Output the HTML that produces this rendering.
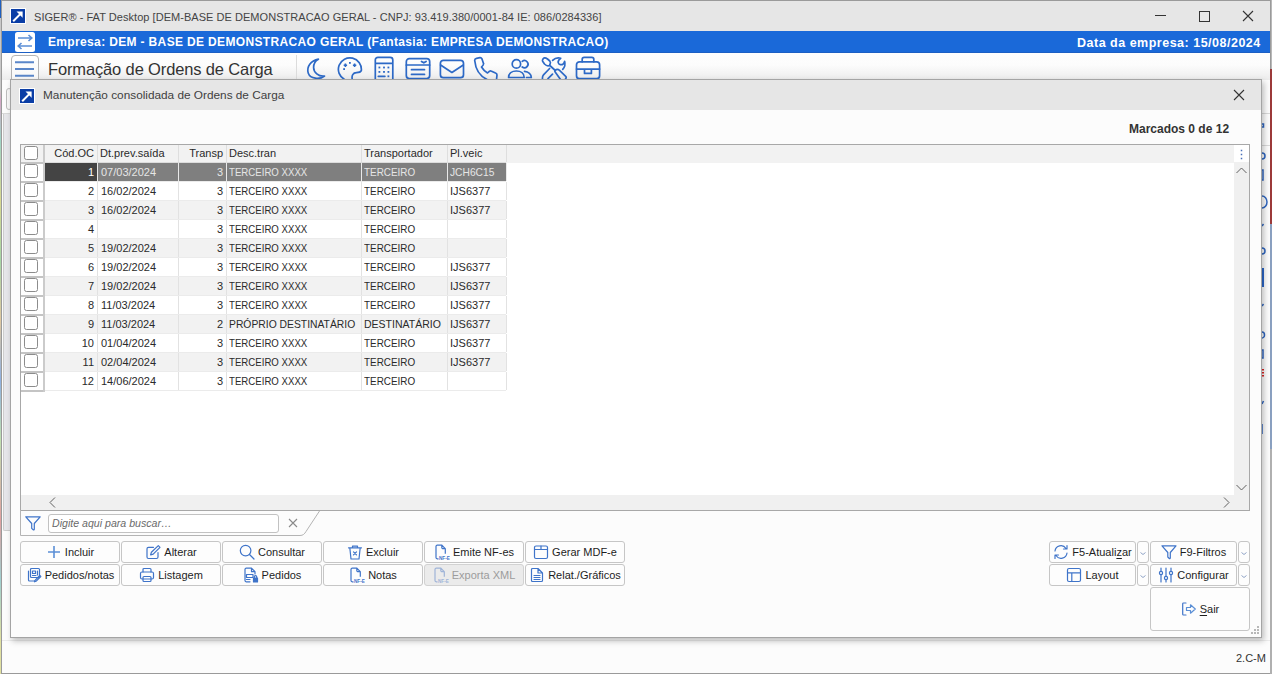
<!DOCTYPE html>
<html><head><meta charset="utf-8">
<style>
*{box-sizing:border-box;margin:0;padding:0}
html,body{width:1272px;height:674px;overflow:hidden;background:#b8b8b8;font-family:"Liberation Sans",sans-serif}
.a{position:absolute}
.t{position:absolute;white-space:nowrap;line-height:1}
#outer{left:1px;top:0;width:1270px;height:674px;border:1px solid #9a9a9a;background:#fcfcfc}
#titlebar{left:2px;top:1px;width:1268px;height:30px;background:#e6e6e6}
#bluebar{left:2px;top:31px;width:1268px;height:22px;background:linear-gradient(#1a69d9 0,#1a69d9 21px,#1c5fc4 21px)}
#toolbar{left:2px;top:53px;width:1268px;height:27px;background:linear-gradient(#fefefe,#fcfcfc 45%,#ececec)}
#dlg{left:10px;top:79px;width:1252px;height:559px;border:1px solid #a4a4a4;background:#fcfcfc;box-shadow:2px 3px 6px rgba(0,0,0,.25)}
#dlgtitle{left:0;top:0;width:1250px;height:30px;background:#e6e6e6}
#grid{left:9px;top:64px;width:1230px;height:367px;border:1px solid #a9a9a9;background:#fff}
</style></head><body>
<div id="outer" class="a"></div>
<div id="titlebar" class="a"></div>
<div id="bluebar" class="a"></div>
<div id="toolbar" class="a"></div>

<!-- title bar -->
<div class="a" style="left:10px;top:8px;width:16px;height:16px;background:#fff"></div>
<svg class="a" style="left:11px;top:9px" width="14" height="14" viewBox="0 0 14 14"><rect width="14" height="14" fill="#0b3ea6"/><path d="M2.2 12.2 L10.5 3.9" stroke="#fff" stroke-width="2"/><path d="M5.5 2.6 L11.6 2.6 L11.6 8.7 Z" fill="#fff"/></svg>
<div class="t" style="left:34px;top:12px;font-size:11px;color:#444;letter-spacing:0.04px">SIGER® - FAT Desktop [DEM-BASE DE DEMONSTRACAO GERAL - CNPJ: 93.419.380/0001-84 IE: 086/0284336]</div>
<svg class="a" style="left:1155px;top:15px" width="11" height="1"><rect width="11" height="1" fill="#333"/></svg>
<svg class="a" style="left:1199px;top:11px" width="11" height="11"><rect x=".5" y=".5" width="10" height="10" fill="none" stroke="#333"/></svg>
<svg class="a" style="left:1242px;top:10px" width="12" height="12"><path d="M1 1 L11 11 M11 1 L1 11" stroke="#333" stroke-width="1.1"/></svg>
<!-- blue bar -->
<svg class="a" style="left:15px;top:32px" width="20" height="20" viewBox="0 0 20 20"><rect width="20" height="20" rx="2.5" fill="#fff"/><path d="M3 6 H16.5 M13.5 3 L16.8 6 L13.5 9 M17 14 H3.5 M6.5 11 L3.2 14 L6.5 17" stroke="#5b8ed6" stroke-width="1.6" fill="none"/></svg>
<div class="t" style="left:48px;top:36px;font-size:12px;font-weight:bold;color:#fff;letter-spacing:0.35px">Empresa: DEM - BASE DE DEMONSTRACAO GERAL (Fantasia: EMPRESA DEMONSTRACAO)</div>
<div class="t" style="left:1077px;top:37px;font-size:12.5px;font-weight:bold;color:#fff;letter-spacing:0.5px">Data da empresa: 15/08/2024</div>

<!-- toolbar -->
<div class="a" style="left:11px;top:55px;width:28px;height:30px;border:1px solid #b4b4b4;border-radius:4px;background:linear-gradient(#fff,#f6f6f6)"></div>
<svg class="a" style="left:15px;top:61px" width="19" height="16"><path d="M0 1.2 H19 M0 8 H19 M0 14.8 H19" stroke="#5a86c9" stroke-width="2"/></svg>
<div class="t" style="left:48px;top:61px;font-size:16.5px;color:#333;letter-spacing:-0.14px">Formação de Ordens de Carga</div>
<div class="a" style="left:296px;top:55px;width:1px;height:25px;background:#dcdcdc"></div>

<svg class="a" style="left:300px;top:54px" width="310" height="26" viewBox="0 0 310 26">
<g fill="none" stroke="#2d69c6" stroke-width="1.7" stroke-linejoin="round" stroke-linecap="round">
<!-- moon -->
<path d="M18.4 5.2 C11 6.5 6.2 13 8.3 19.2 C10.3 24.8 19.5 26 24.5 22 C18.5 22.8 13.6 18.2 13.6 13.4 C13.6 9.6 15.4 6.8 18.4 5.2 Z"/>
<!-- palette -->
<path d="M44.5 25.5 A11.5 11.5 0 1 1 61.3 16.6 C60.6 18.2 59 18.6 56.5 18.6 C53 18.6 51.4 21.6 52.3 25.5"/>
<!-- calculator -->
<path d="M5.3 25.5 V6 A2.6 2.6 0 0 1 7.9 3.4 H20.2 A2.6 2.6 0 0 1 22.8 6 V25.5 M5.3 9.4 H22.8" transform="translate(70 0)"/>
<path d="M78.3 22.3 H84.9" />
<!-- window -->
<rect x="106.3" y="4.7" width="23.4" height="19.8" rx="3"/>
<path d="M106.3 11 H129.7 M111.5 15.7 H124.5 M111.5 20.4 H124.5 M121.5 7.4 L123.8 8.8 L126.1 7.4"/>
<!-- mail -->
<rect x="140.4" y="6.3" width="23.1" height="17.4" rx="3"/>
<path d="M140.6 11 L151.9 18.5 L163.3 11"/>
<!-- phone -->
<path d="M196.5 25.5 L197 21 C197 20 196.5 19.3 195.5 19 L191 17 C190 16.5 189 17.5 187.5 19 C185 17.5 183 15.5 181.5 13 C183 11.5 184 10.5 183.5 9.5 L182 5 C181.5 4 181 3.6 180 3.7 L176.5 4.3 C175 4.6 174.5 5.5 174.8 7 C175.5 15 180 22 187 25.5"/>
<!-- users -->
<circle cx="216.4" cy="9.9" r="4.2"/>
<path d="M222.2 7.3 A3.6 3.6 0 1 1 222.2 13"/>
<path d="M208.6 23.5 C208.6 19.5 212 17 216.4 17 C220.8 17 224.2 19.5 224.2 23.5 Z"/>
<path d="M224.5 17.3 C228.5 17.8 231.3 20.5 231.3 23.5 H226.5"/>
<!-- tools -->
<path d="M242.6 7.2 C242 6 243.2 4.2 244.6 3.9 C245.5 3.7 246.5 4.3 247.5 5 L249.8 7 C250.5 7.8 250.6 9.2 250 10.5 L249.5 11.5 L248 11.8 C246.8 11.8 245.5 11 244.5 10 Z M249.8 11.5 L255.3 16.5"/>
<path d="M255 17.8 C254.5 16.5 255.7 15.3 257.5 15.3 C258.3 15.3 258.8 15.7 259.3 16.2 L265.7 22.3 C266.4 23 266 24.5 265 25.5 M255 17.8 L260.5 25.5"/>
<path d="M252.6 6.4 C254.5 4.5 258 3.5 260.7 4.2 C259 5.5 257.8 7 258.2 8.6 C258.8 10.8 261.5 11.2 263.2 10 C264 9 264.5 8 264.6 7.3 C265.5 10.5 264.5 13.5 262.7 15.4"/>
<path d="M249.6 14.5 L243.5 20.8 C242.5 21.8 242.3 23.5 242.5 25.5 M252.5 20.2 L248 24.7"/>
<!-- briefcase -->
<rect x="276.5" y="7.8" width="23.1" height="16.9" rx="3"/>
<path d="M282.2 7.8 V5.3 A2 2 0 0 1 284.2 3.3 H291.8 A2 2 0 0 1 293.8 5.3 V7.8 M276.5 15.1 H299.6 M284.5 15.1 V19.4 H291.4 V15.1"/>
</g>
<g fill="#2d69c6">
<rect x="49" y="8" width="1.8" height="1.8"/><rect x="43.2" y="14.2" width="1.8" height="1.8"/>
<path d="M44.6 9.6 h1.6 v0.9 h0.9 v1.6 h-0.9 v0.9 h-1.6 v-0.9 h-0.9 v-1.6 h0.9z M53.8 9.6 h1.6 v0.9 h0.9 v1.6 h-0.9 v0.9 h-1.6 v-0.9 h-0.9 v-1.6 h0.9z"/>
<rect x="78.5" y="12.6" width="1.8" height="1.8"/><rect x="83.1" y="12.6" width="1.8" height="1.8"/><rect x="87.5" y="12.6" width="1.8" height="1.8"/>
<rect x="78.5" y="17" width="1.8" height="1.8"/><rect x="83.1" y="17" width="1.8" height="1.8"/><rect x="87.5" y="17" width="1.8" height="1.8"/>
<rect x="87.5" y="21.4" width="1.8" height="1.8"/>
</g>
</svg>

<!-- status + side strips -->
<div class="t" style="left:1236px;top:653px;font-size:11px;color:#333">2.C-M</div>
<div class="a" style="left:2px;top:640px;width:1268px;height:1px;background:#ececec"></div>
<div class="a" style="left:0;top:0;width:1px;height:674px;background:linear-gradient(#1f5fbf 0,#1f5fbf 18px,#c8c8c8 18px,#c8c8c8 90px,#d6a6c6 100px,#9fd4c6 140px,#d8d890 200px,#a6d6a6 260px,#e0c8a0 320px,#8fb0e0 380px,#c0e0b0 440px,#e0a0a0 520px,#a0d0d0 580px,#e0e0a0 640px)"></div>
<div class="a" style="left:1270px;top:69px;width:2px;height:605px;background:linear-gradient(#9c3a3a 0,#9c3a3a 155px,#8aa0c0 155px,#8aa0c0 380px,#b0b0b0 380px)"></div>
<div class="a" style="left:1262px;top:113px;width:8px;height:1px;background:#d8d8d8"></div>
<div class="a" style="left:1262px;top:145px;width:8px;height:1px;background:#d8d8d8"></div>
<div class="a" style="left:1262px;top:268px;width:2px;height:19px;background:#2a66c8"></div>
<div class="a" style="left:6px;top:88px;width:6px;height:22px;border:1px solid #bdbdbd;border-radius:3px;background:#f8f8f8"></div>
<div class="a" style="left:2px;top:113px;width:8px;height:1px;background:#d8d8d8"></div>
<div class="a" style="left:3px;top:114px;width:7px;height:417px;border-left:1px solid #cdcdcd;border-bottom:1px solid #cdcdcd;border-bottom-left-radius:2px;background:#e6e6ea"></div>

<svg class="a" style="left:1262px;top:114px" width="8" height="340"><g fill="none" stroke="#2f66c0" stroke-width="1.5">
<path d="M0 10 h1.5 v3 h-1.5"/><path d="M0 39 a3 3 0 0 1 0 6"/><path d="M0 56 h1 v10 h-1"/><path d="M0 82 a5 6 0 0 1 0 12"/><path d="M0 112 l1.5 -2"/><path d="M0 134 a3 3 0 0 1 0 6"/>
<path d="M0 192 l1.5 -2"/><path d="M0 218 a2.5 3 0 0 1 0 6"/><path d="M0 236 h1 v8 h-1"/><path d="M0 290 l1.5 -3"/><path d="M0 310 v10"/>
</g><g fill="#d22" ><rect x="0" y="255" width="2" height="1.5"/><rect x="0" y="258" width="2" height="1.5"/><rect x="0" y="261" width="2" height="1.5"/></g></svg>
<div id="dlg" class="a">
  <div id="dlgtitle" class="a"></div>
  <div class="a" style="left:8px;top:8px;width:16px;height:16px;background:#fff"></div>
  <svg class="a" style="left:9px;top:9px" width="14" height="14" viewBox="0 0 14 14"><rect width="14" height="14" fill="#0b3ea6"/><path d="M2.2 12.2 L10.5 3.9" stroke="#fff" stroke-width="2"/><path d="M5.5 2.6 L11.6 2.6 L11.6 8.7 Z" fill="#fff"/></svg>
  <div class="t" style="left:32px;top:10px;font-size:11.8px;color:#404040">Manutenção consolidada de Ordens de Carga</div>
  <svg class="a" style="left:1222px;top:9px" width="12" height="12"><path d="M1 1 L11 11 M11 1 L1 11" stroke="#333" stroke-width="1.1"/></svg>
  <div class="t" style="left:1118px;top:43px;font-size:12px;font-weight:bold;color:#333">Marcados 0 de 12</div>

  
</div>
<!--GRID--><div class="a" style="left:20px;top:144px;width:1230px;height:367px;border:1px solid #a8a8a8;background:#fff"></div>
<div class="a" style="left:21px;top:145px;width:1213px;height:18px;background:#f2f2f2"></div>
<div class="a" style="left:1234px;top:145px;width:15px;height:17px;background:#fff"></div>
<div class="a" style="left:44px;top:145px;width:1px;height:17px;background:#d6d6d6"></div>
<div class="a" style="left:97px;top:145px;width:1px;height:17px;background:#dedede"></div>
<div class="a" style="left:178px;top:145px;width:1px;height:17px;background:#dedede"></div>
<div class="a" style="left:226px;top:145px;width:1px;height:17px;background:#dedede"></div>
<div class="a" style="left:361px;top:145px;width:1px;height:17px;background:#dedede"></div>
<div class="a" style="left:447px;top:145px;width:1px;height:17px;background:#dedede"></div>
<div class="a" style="left:506px;top:145px;width:1px;height:17px;background:#dedede"></div>
<div class="t" style="left:45px;width:49px;top:148px;text-align:right;font-size:11px;color:#2a2a2a;">Cód.OC</div>
<div class="t" style="left:100px;top:148px;font-size:11px;color:#2a2a2a;">Dt.prev.saída</div>
<div class="t" style="left:179px;width:44px;top:148px;text-align:right;font-size:11px;color:#2a2a2a;">Transp</div>
<div class="t" style="left:229px;top:148px;font-size:11px;color:#2a2a2a;">Desc.tran</div>
<div class="t" style="left:364px;top:148px;font-size:11px;color:#2a2a2a;">Transportador</div>
<div class="t" style="left:450px;top:148px;font-size:11px;color:#2a2a2a;">Pl.veic</div>
<div class="a" style="left:24px;top:146px;width:14px;height:14px;border:1px solid #8c8c8c;border-radius:2.5px;background:#fff"></div>
<div class="a" style="left:21px;top:162px;width:23px;height:1.5px;background:#c4c4c4"></div>
<div class="a" style="left:24px;top:164px;width:14px;height:14px;border:1px solid #8c8c8c;border-radius:2.5px;background:#fff"></div>
<div class="a" style="left:45px;top:162px;width:461px;height:1px;background:#dcdcdc"></div>
<div class="a" style="left:45px;top:163px;width:52px;height:18px;background:#444444"></div>
<div class="a" style="left:97px;top:163px;width:1px;height:18px;background:#e9e9e9"></div>
<div class="a" style="left:98px;top:163px;width:80px;height:18px;background:#7f7f7f"></div>
<div class="a" style="left:178px;top:163px;width:1px;height:18px;background:#e9e9e9"></div>
<div class="a" style="left:179px;top:163px;width:47px;height:18px;background:#7f7f7f"></div>
<div class="a" style="left:226px;top:163px;width:1px;height:18px;background:#e9e9e9"></div>
<div class="a" style="left:227px;top:163px;width:134px;height:18px;background:#7f7f7f"></div>
<div class="a" style="left:361px;top:163px;width:1px;height:18px;background:#e9e9e9"></div>
<div class="a" style="left:362px;top:163px;width:85px;height:18px;background:#7f7f7f"></div>
<div class="a" style="left:447px;top:163px;width:1px;height:18px;background:#e9e9e9"></div>
<div class="a" style="left:448px;top:163px;width:58px;height:18px;background:#7f7f7f"></div>
<div class="a" style="left:506px;top:163px;width:1px;height:18px;background:#e9e9e9"></div>
<div class="t" style="left:45px;width:49px;top:167px;text-align:right;font-size:11px;color:#ffffff;">1</div>
<div class="t" style="left:101px;top:167px;font-size:11px;color:#e6e6e6;">07/03/2024</div>
<div class="t" style="left:179px;width:44px;top:167px;text-align:right;font-size:11px;color:#e6e6e6;">3</div>
<div class="t" style="left:229px;top:167px;font-size:11px;color:#e6e6e6;transform:scaleX(0.877);transform-origin:0 0;">TERCEIRO XXXX</div>
<div class="t" style="left:364px;top:167px;font-size:11px;color:#e6e6e6;transform:scaleX(0.9);transform-origin:0 0;">TERCEIRO</div>
<div class="t" style="left:450px;top:167px;font-size:11px;color:#e6e6e6;transform:scaleX(0.93);transform-origin:0 0;">JCH6C15</div>
<div class="a" style="left:21px;top:181px;width:23px;height:1.5px;background:#c4c4c4"></div>
<div class="a" style="left:24px;top:183px;width:14px;height:14px;border:1px solid #8c8c8c;border-radius:2.5px;background:#fff"></div>
<div class="a" style="left:45px;top:181px;width:461px;height:1px;background:#ebebeb"></div>
<div class="a" style="left:45px;top:182px;width:52px;height:18px;background:#ffffff"></div>
<div class="a" style="left:97px;top:182px;width:1px;height:18px;background:#e2e2e2"></div>
<div class="a" style="left:98px;top:182px;width:80px;height:18px;background:#ffffff"></div>
<div class="a" style="left:178px;top:182px;width:1px;height:18px;background:#e2e2e2"></div>
<div class="a" style="left:179px;top:182px;width:47px;height:18px;background:#ffffff"></div>
<div class="a" style="left:226px;top:182px;width:1px;height:18px;background:#e2e2e2"></div>
<div class="a" style="left:227px;top:182px;width:134px;height:18px;background:#ffffff"></div>
<div class="a" style="left:361px;top:182px;width:1px;height:18px;background:#e2e2e2"></div>
<div class="a" style="left:362px;top:182px;width:85px;height:18px;background:#ffffff"></div>
<div class="a" style="left:447px;top:182px;width:1px;height:18px;background:#e2e2e2"></div>
<div class="a" style="left:448px;top:182px;width:58px;height:18px;background:#ffffff"></div>
<div class="a" style="left:506px;top:182px;width:1px;height:18px;background:#e2e2e2"></div>
<div class="t" style="left:45px;width:49px;top:186px;text-align:right;font-size:11px;color:#2a2a2a;">2</div>
<div class="t" style="left:101px;top:186px;font-size:11px;color:#2a2a2a;">16/02/2024</div>
<div class="t" style="left:179px;width:44px;top:186px;text-align:right;font-size:11px;color:#2a2a2a;">3</div>
<div class="t" style="left:229px;top:186px;font-size:11px;color:#2a2a2a;transform:scaleX(0.877);transform-origin:0 0;">TERCEIRO XXXX</div>
<div class="t" style="left:364px;top:186px;font-size:11px;color:#2a2a2a;transform:scaleX(0.9);transform-origin:0 0;">TERCEIRO</div>
<div class="t" style="left:450px;top:186px;font-size:11px;color:#2a2a2a;">IJS6377</div>
<div class="a" style="left:21px;top:200px;width:23px;height:1.5px;background:#c4c4c4"></div>
<div class="a" style="left:24px;top:202px;width:14px;height:14px;border:1px solid #8c8c8c;border-radius:2.5px;background:#fff"></div>
<div class="a" style="left:45px;top:200px;width:461px;height:1px;background:#ebebeb"></div>
<div class="a" style="left:45px;top:201px;width:52px;height:18px;background:#f2f2f2"></div>
<div class="a" style="left:97px;top:201px;width:1px;height:18px;background:#e2e2e2"></div>
<div class="a" style="left:98px;top:201px;width:80px;height:18px;background:#f2f2f2"></div>
<div class="a" style="left:178px;top:201px;width:1px;height:18px;background:#e2e2e2"></div>
<div class="a" style="left:179px;top:201px;width:47px;height:18px;background:#f2f2f2"></div>
<div class="a" style="left:226px;top:201px;width:1px;height:18px;background:#e2e2e2"></div>
<div class="a" style="left:227px;top:201px;width:134px;height:18px;background:#f2f2f2"></div>
<div class="a" style="left:361px;top:201px;width:1px;height:18px;background:#e2e2e2"></div>
<div class="a" style="left:362px;top:201px;width:85px;height:18px;background:#f2f2f2"></div>
<div class="a" style="left:447px;top:201px;width:1px;height:18px;background:#e2e2e2"></div>
<div class="a" style="left:448px;top:201px;width:58px;height:18px;background:#f2f2f2"></div>
<div class="a" style="left:506px;top:201px;width:1px;height:18px;background:#e2e2e2"></div>
<div class="t" style="left:45px;width:49px;top:205px;text-align:right;font-size:11px;color:#2a2a2a;">3</div>
<div class="t" style="left:101px;top:205px;font-size:11px;color:#2a2a2a;">16/02/2024</div>
<div class="t" style="left:179px;width:44px;top:205px;text-align:right;font-size:11px;color:#2a2a2a;">3</div>
<div class="t" style="left:229px;top:205px;font-size:11px;color:#2a2a2a;transform:scaleX(0.877);transform-origin:0 0;">TERCEIRO XXXX</div>
<div class="t" style="left:364px;top:205px;font-size:11px;color:#2a2a2a;transform:scaleX(0.9);transform-origin:0 0;">TERCEIRO</div>
<div class="t" style="left:450px;top:205px;font-size:11px;color:#2a2a2a;">IJS6377</div>
<div class="a" style="left:21px;top:219px;width:23px;height:1.5px;background:#c4c4c4"></div>
<div class="a" style="left:24px;top:221px;width:14px;height:14px;border:1px solid #8c8c8c;border-radius:2.5px;background:#fff"></div>
<div class="a" style="left:45px;top:219px;width:461px;height:1px;background:#ebebeb"></div>
<div class="a" style="left:45px;top:220px;width:52px;height:18px;background:#ffffff"></div>
<div class="a" style="left:97px;top:220px;width:1px;height:18px;background:#e2e2e2"></div>
<div class="a" style="left:98px;top:220px;width:80px;height:18px;background:#ffffff"></div>
<div class="a" style="left:178px;top:220px;width:1px;height:18px;background:#e2e2e2"></div>
<div class="a" style="left:179px;top:220px;width:47px;height:18px;background:#ffffff"></div>
<div class="a" style="left:226px;top:220px;width:1px;height:18px;background:#e2e2e2"></div>
<div class="a" style="left:227px;top:220px;width:134px;height:18px;background:#ffffff"></div>
<div class="a" style="left:361px;top:220px;width:1px;height:18px;background:#e2e2e2"></div>
<div class="a" style="left:362px;top:220px;width:85px;height:18px;background:#ffffff"></div>
<div class="a" style="left:447px;top:220px;width:1px;height:18px;background:#e2e2e2"></div>
<div class="a" style="left:448px;top:220px;width:58px;height:18px;background:#ffffff"></div>
<div class="a" style="left:506px;top:220px;width:1px;height:18px;background:#e2e2e2"></div>
<div class="t" style="left:45px;width:49px;top:224px;text-align:right;font-size:11px;color:#2a2a2a;">4</div>
<div class="t" style="left:179px;width:44px;top:224px;text-align:right;font-size:11px;color:#2a2a2a;">3</div>
<div class="t" style="left:229px;top:224px;font-size:11px;color:#2a2a2a;transform:scaleX(0.877);transform-origin:0 0;">TERCEIRO XXXX</div>
<div class="t" style="left:364px;top:224px;font-size:11px;color:#2a2a2a;transform:scaleX(0.9);transform-origin:0 0;">TERCEIRO</div>
<div class="a" style="left:21px;top:238px;width:23px;height:1.5px;background:#c4c4c4"></div>
<div class="a" style="left:24px;top:240px;width:14px;height:14px;border:1px solid #8c8c8c;border-radius:2.5px;background:#fff"></div>
<div class="a" style="left:45px;top:238px;width:461px;height:1px;background:#ebebeb"></div>
<div class="a" style="left:45px;top:239px;width:52px;height:18px;background:#f2f2f2"></div>
<div class="a" style="left:97px;top:239px;width:1px;height:18px;background:#e2e2e2"></div>
<div class="a" style="left:98px;top:239px;width:80px;height:18px;background:#f2f2f2"></div>
<div class="a" style="left:178px;top:239px;width:1px;height:18px;background:#e2e2e2"></div>
<div class="a" style="left:179px;top:239px;width:47px;height:18px;background:#f2f2f2"></div>
<div class="a" style="left:226px;top:239px;width:1px;height:18px;background:#e2e2e2"></div>
<div class="a" style="left:227px;top:239px;width:134px;height:18px;background:#f2f2f2"></div>
<div class="a" style="left:361px;top:239px;width:1px;height:18px;background:#e2e2e2"></div>
<div class="a" style="left:362px;top:239px;width:85px;height:18px;background:#f2f2f2"></div>
<div class="a" style="left:447px;top:239px;width:1px;height:18px;background:#e2e2e2"></div>
<div class="a" style="left:448px;top:239px;width:58px;height:18px;background:#f2f2f2"></div>
<div class="a" style="left:506px;top:239px;width:1px;height:18px;background:#e2e2e2"></div>
<div class="t" style="left:45px;width:49px;top:243px;text-align:right;font-size:11px;color:#2a2a2a;">5</div>
<div class="t" style="left:101px;top:243px;font-size:11px;color:#2a2a2a;">19/02/2024</div>
<div class="t" style="left:179px;width:44px;top:243px;text-align:right;font-size:11px;color:#2a2a2a;">3</div>
<div class="t" style="left:229px;top:243px;font-size:11px;color:#2a2a2a;transform:scaleX(0.877);transform-origin:0 0;">TERCEIRO XXXX</div>
<div class="t" style="left:364px;top:243px;font-size:11px;color:#2a2a2a;transform:scaleX(0.9);transform-origin:0 0;">TERCEIRO</div>
<div class="a" style="left:21px;top:257px;width:23px;height:1.5px;background:#c4c4c4"></div>
<div class="a" style="left:24px;top:259px;width:14px;height:14px;border:1px solid #8c8c8c;border-radius:2.5px;background:#fff"></div>
<div class="a" style="left:45px;top:257px;width:461px;height:1px;background:#ebebeb"></div>
<div class="a" style="left:45px;top:258px;width:52px;height:18px;background:#ffffff"></div>
<div class="a" style="left:97px;top:258px;width:1px;height:18px;background:#e2e2e2"></div>
<div class="a" style="left:98px;top:258px;width:80px;height:18px;background:#ffffff"></div>
<div class="a" style="left:178px;top:258px;width:1px;height:18px;background:#e2e2e2"></div>
<div class="a" style="left:179px;top:258px;width:47px;height:18px;background:#ffffff"></div>
<div class="a" style="left:226px;top:258px;width:1px;height:18px;background:#e2e2e2"></div>
<div class="a" style="left:227px;top:258px;width:134px;height:18px;background:#ffffff"></div>
<div class="a" style="left:361px;top:258px;width:1px;height:18px;background:#e2e2e2"></div>
<div class="a" style="left:362px;top:258px;width:85px;height:18px;background:#ffffff"></div>
<div class="a" style="left:447px;top:258px;width:1px;height:18px;background:#e2e2e2"></div>
<div class="a" style="left:448px;top:258px;width:58px;height:18px;background:#ffffff"></div>
<div class="a" style="left:506px;top:258px;width:1px;height:18px;background:#e2e2e2"></div>
<div class="t" style="left:45px;width:49px;top:262px;text-align:right;font-size:11px;color:#2a2a2a;">6</div>
<div class="t" style="left:101px;top:262px;font-size:11px;color:#2a2a2a;">19/02/2024</div>
<div class="t" style="left:179px;width:44px;top:262px;text-align:right;font-size:11px;color:#2a2a2a;">3</div>
<div class="t" style="left:229px;top:262px;font-size:11px;color:#2a2a2a;transform:scaleX(0.877);transform-origin:0 0;">TERCEIRO XXXX</div>
<div class="t" style="left:364px;top:262px;font-size:11px;color:#2a2a2a;transform:scaleX(0.9);transform-origin:0 0;">TERCEIRO</div>
<div class="t" style="left:450px;top:262px;font-size:11px;color:#2a2a2a;">IJS6377</div>
<div class="a" style="left:21px;top:276px;width:23px;height:1.5px;background:#c4c4c4"></div>
<div class="a" style="left:24px;top:278px;width:14px;height:14px;border:1px solid #8c8c8c;border-radius:2.5px;background:#fff"></div>
<div class="a" style="left:45px;top:276px;width:461px;height:1px;background:#ebebeb"></div>
<div class="a" style="left:45px;top:277px;width:52px;height:18px;background:#f2f2f2"></div>
<div class="a" style="left:97px;top:277px;width:1px;height:18px;background:#e2e2e2"></div>
<div class="a" style="left:98px;top:277px;width:80px;height:18px;background:#f2f2f2"></div>
<div class="a" style="left:178px;top:277px;width:1px;height:18px;background:#e2e2e2"></div>
<div class="a" style="left:179px;top:277px;width:47px;height:18px;background:#f2f2f2"></div>
<div class="a" style="left:226px;top:277px;width:1px;height:18px;background:#e2e2e2"></div>
<div class="a" style="left:227px;top:277px;width:134px;height:18px;background:#f2f2f2"></div>
<div class="a" style="left:361px;top:277px;width:1px;height:18px;background:#e2e2e2"></div>
<div class="a" style="left:362px;top:277px;width:85px;height:18px;background:#f2f2f2"></div>
<div class="a" style="left:447px;top:277px;width:1px;height:18px;background:#e2e2e2"></div>
<div class="a" style="left:448px;top:277px;width:58px;height:18px;background:#f2f2f2"></div>
<div class="a" style="left:506px;top:277px;width:1px;height:18px;background:#e2e2e2"></div>
<div class="t" style="left:45px;width:49px;top:281px;text-align:right;font-size:11px;color:#2a2a2a;">7</div>
<div class="t" style="left:101px;top:281px;font-size:11px;color:#2a2a2a;">19/02/2024</div>
<div class="t" style="left:179px;width:44px;top:281px;text-align:right;font-size:11px;color:#2a2a2a;">3</div>
<div class="t" style="left:229px;top:281px;font-size:11px;color:#2a2a2a;transform:scaleX(0.877);transform-origin:0 0;">TERCEIRO XXXX</div>
<div class="t" style="left:364px;top:281px;font-size:11px;color:#2a2a2a;transform:scaleX(0.9);transform-origin:0 0;">TERCEIRO</div>
<div class="t" style="left:450px;top:281px;font-size:11px;color:#2a2a2a;">IJS6377</div>
<div class="a" style="left:21px;top:295px;width:23px;height:1.5px;background:#c4c4c4"></div>
<div class="a" style="left:24px;top:297px;width:14px;height:14px;border:1px solid #8c8c8c;border-radius:2.5px;background:#fff"></div>
<div class="a" style="left:45px;top:295px;width:461px;height:1px;background:#ebebeb"></div>
<div class="a" style="left:45px;top:296px;width:52px;height:18px;background:#ffffff"></div>
<div class="a" style="left:97px;top:296px;width:1px;height:18px;background:#e2e2e2"></div>
<div class="a" style="left:98px;top:296px;width:80px;height:18px;background:#ffffff"></div>
<div class="a" style="left:178px;top:296px;width:1px;height:18px;background:#e2e2e2"></div>
<div class="a" style="left:179px;top:296px;width:47px;height:18px;background:#ffffff"></div>
<div class="a" style="left:226px;top:296px;width:1px;height:18px;background:#e2e2e2"></div>
<div class="a" style="left:227px;top:296px;width:134px;height:18px;background:#ffffff"></div>
<div class="a" style="left:361px;top:296px;width:1px;height:18px;background:#e2e2e2"></div>
<div class="a" style="left:362px;top:296px;width:85px;height:18px;background:#ffffff"></div>
<div class="a" style="left:447px;top:296px;width:1px;height:18px;background:#e2e2e2"></div>
<div class="a" style="left:448px;top:296px;width:58px;height:18px;background:#ffffff"></div>
<div class="a" style="left:506px;top:296px;width:1px;height:18px;background:#e2e2e2"></div>
<div class="t" style="left:45px;width:49px;top:300px;text-align:right;font-size:11px;color:#2a2a2a;">8</div>
<div class="t" style="left:101px;top:300px;font-size:11px;color:#2a2a2a;">11/03/2024</div>
<div class="t" style="left:179px;width:44px;top:300px;text-align:right;font-size:11px;color:#2a2a2a;">3</div>
<div class="t" style="left:229px;top:300px;font-size:11px;color:#2a2a2a;transform:scaleX(0.877);transform-origin:0 0;">TERCEIRO XXXX</div>
<div class="t" style="left:364px;top:300px;font-size:11px;color:#2a2a2a;transform:scaleX(0.9);transform-origin:0 0;">TERCEIRO</div>
<div class="t" style="left:450px;top:300px;font-size:11px;color:#2a2a2a;">IJS6377</div>
<div class="a" style="left:21px;top:314px;width:23px;height:1.5px;background:#c4c4c4"></div>
<div class="a" style="left:24px;top:316px;width:14px;height:14px;border:1px solid #8c8c8c;border-radius:2.5px;background:#fff"></div>
<div class="a" style="left:45px;top:314px;width:461px;height:1px;background:#ebebeb"></div>
<div class="a" style="left:45px;top:315px;width:52px;height:18px;background:#f2f2f2"></div>
<div class="a" style="left:97px;top:315px;width:1px;height:18px;background:#e2e2e2"></div>
<div class="a" style="left:98px;top:315px;width:80px;height:18px;background:#f2f2f2"></div>
<div class="a" style="left:178px;top:315px;width:1px;height:18px;background:#e2e2e2"></div>
<div class="a" style="left:179px;top:315px;width:47px;height:18px;background:#f2f2f2"></div>
<div class="a" style="left:226px;top:315px;width:1px;height:18px;background:#e2e2e2"></div>
<div class="a" style="left:227px;top:315px;width:134px;height:18px;background:#f2f2f2"></div>
<div class="a" style="left:361px;top:315px;width:1px;height:18px;background:#e2e2e2"></div>
<div class="a" style="left:362px;top:315px;width:85px;height:18px;background:#f2f2f2"></div>
<div class="a" style="left:447px;top:315px;width:1px;height:18px;background:#e2e2e2"></div>
<div class="a" style="left:448px;top:315px;width:58px;height:18px;background:#f2f2f2"></div>
<div class="a" style="left:506px;top:315px;width:1px;height:18px;background:#e2e2e2"></div>
<div class="t" style="left:45px;width:49px;top:319px;text-align:right;font-size:11px;color:#2a2a2a;">9</div>
<div class="t" style="left:101px;top:319px;font-size:11px;color:#2a2a2a;">11/03/2024</div>
<div class="t" style="left:179px;width:44px;top:319px;text-align:right;font-size:11px;color:#2a2a2a;">2</div>
<div class="t" style="left:229px;top:319px;font-size:11px;color:#2a2a2a;transform:scaleX(0.94);transform-origin:0 0;">PRÓPRIO DESTINATÁRIO</div>
<div class="t" style="left:364px;top:319px;font-size:11px;color:#2a2a2a;transform:scaleX(0.956);transform-origin:0 0;">DESTINATÁRIO</div>
<div class="t" style="left:450px;top:319px;font-size:11px;color:#2a2a2a;">IJS6377</div>
<div class="a" style="left:21px;top:333px;width:23px;height:1.5px;background:#c4c4c4"></div>
<div class="a" style="left:24px;top:335px;width:14px;height:14px;border:1px solid #8c8c8c;border-radius:2.5px;background:#fff"></div>
<div class="a" style="left:45px;top:333px;width:461px;height:1px;background:#ebebeb"></div>
<div class="a" style="left:45px;top:334px;width:52px;height:18px;background:#ffffff"></div>
<div class="a" style="left:97px;top:334px;width:1px;height:18px;background:#e2e2e2"></div>
<div class="a" style="left:98px;top:334px;width:80px;height:18px;background:#ffffff"></div>
<div class="a" style="left:178px;top:334px;width:1px;height:18px;background:#e2e2e2"></div>
<div class="a" style="left:179px;top:334px;width:47px;height:18px;background:#ffffff"></div>
<div class="a" style="left:226px;top:334px;width:1px;height:18px;background:#e2e2e2"></div>
<div class="a" style="left:227px;top:334px;width:134px;height:18px;background:#ffffff"></div>
<div class="a" style="left:361px;top:334px;width:1px;height:18px;background:#e2e2e2"></div>
<div class="a" style="left:362px;top:334px;width:85px;height:18px;background:#ffffff"></div>
<div class="a" style="left:447px;top:334px;width:1px;height:18px;background:#e2e2e2"></div>
<div class="a" style="left:448px;top:334px;width:58px;height:18px;background:#ffffff"></div>
<div class="a" style="left:506px;top:334px;width:1px;height:18px;background:#e2e2e2"></div>
<div class="t" style="left:45px;width:49px;top:338px;text-align:right;font-size:11px;color:#2a2a2a;">10</div>
<div class="t" style="left:101px;top:338px;font-size:11px;color:#2a2a2a;">01/04/2024</div>
<div class="t" style="left:179px;width:44px;top:338px;text-align:right;font-size:11px;color:#2a2a2a;">3</div>
<div class="t" style="left:229px;top:338px;font-size:11px;color:#2a2a2a;transform:scaleX(0.877);transform-origin:0 0;">TERCEIRO XXXX</div>
<div class="t" style="left:364px;top:338px;font-size:11px;color:#2a2a2a;transform:scaleX(0.9);transform-origin:0 0;">TERCEIRO</div>
<div class="t" style="left:450px;top:338px;font-size:11px;color:#2a2a2a;">IJS6377</div>
<div class="a" style="left:21px;top:352px;width:23px;height:1.5px;background:#c4c4c4"></div>
<div class="a" style="left:24px;top:354px;width:14px;height:14px;border:1px solid #8c8c8c;border-radius:2.5px;background:#fff"></div>
<div class="a" style="left:45px;top:352px;width:461px;height:1px;background:#ebebeb"></div>
<div class="a" style="left:45px;top:353px;width:52px;height:18px;background:#f2f2f2"></div>
<div class="a" style="left:97px;top:353px;width:1px;height:18px;background:#e2e2e2"></div>
<div class="a" style="left:98px;top:353px;width:80px;height:18px;background:#f2f2f2"></div>
<div class="a" style="left:178px;top:353px;width:1px;height:18px;background:#e2e2e2"></div>
<div class="a" style="left:179px;top:353px;width:47px;height:18px;background:#f2f2f2"></div>
<div class="a" style="left:226px;top:353px;width:1px;height:18px;background:#e2e2e2"></div>
<div class="a" style="left:227px;top:353px;width:134px;height:18px;background:#f2f2f2"></div>
<div class="a" style="left:361px;top:353px;width:1px;height:18px;background:#e2e2e2"></div>
<div class="a" style="left:362px;top:353px;width:85px;height:18px;background:#f2f2f2"></div>
<div class="a" style="left:447px;top:353px;width:1px;height:18px;background:#e2e2e2"></div>
<div class="a" style="left:448px;top:353px;width:58px;height:18px;background:#f2f2f2"></div>
<div class="a" style="left:506px;top:353px;width:1px;height:18px;background:#e2e2e2"></div>
<div class="t" style="left:45px;width:49px;top:357px;text-align:right;font-size:11px;color:#2a2a2a;">11</div>
<div class="t" style="left:101px;top:357px;font-size:11px;color:#2a2a2a;">02/04/2024</div>
<div class="t" style="left:179px;width:44px;top:357px;text-align:right;font-size:11px;color:#2a2a2a;">3</div>
<div class="t" style="left:229px;top:357px;font-size:11px;color:#2a2a2a;transform:scaleX(0.877);transform-origin:0 0;">TERCEIRO XXXX</div>
<div class="t" style="left:364px;top:357px;font-size:11px;color:#2a2a2a;transform:scaleX(0.9);transform-origin:0 0;">TERCEIRO</div>
<div class="t" style="left:450px;top:357px;font-size:11px;color:#2a2a2a;">IJS6377</div>
<div class="a" style="left:21px;top:371px;width:23px;height:1.5px;background:#c4c4c4"></div>
<div class="a" style="left:24px;top:373px;width:14px;height:14px;border:1px solid #8c8c8c;border-radius:2.5px;background:#fff"></div>
<div class="a" style="left:45px;top:371px;width:461px;height:1px;background:#ebebeb"></div>
<div class="a" style="left:45px;top:372px;width:52px;height:18px;background:#ffffff"></div>
<div class="a" style="left:97px;top:372px;width:1px;height:18px;background:#e2e2e2"></div>
<div class="a" style="left:98px;top:372px;width:80px;height:18px;background:#ffffff"></div>
<div class="a" style="left:178px;top:372px;width:1px;height:18px;background:#e2e2e2"></div>
<div class="a" style="left:179px;top:372px;width:47px;height:18px;background:#ffffff"></div>
<div class="a" style="left:226px;top:372px;width:1px;height:18px;background:#e2e2e2"></div>
<div class="a" style="left:227px;top:372px;width:134px;height:18px;background:#ffffff"></div>
<div class="a" style="left:361px;top:372px;width:1px;height:18px;background:#e2e2e2"></div>
<div class="a" style="left:362px;top:372px;width:85px;height:18px;background:#ffffff"></div>
<div class="a" style="left:447px;top:372px;width:1px;height:18px;background:#e2e2e2"></div>
<div class="a" style="left:448px;top:372px;width:58px;height:18px;background:#ffffff"></div>
<div class="a" style="left:506px;top:372px;width:1px;height:18px;background:#e2e2e2"></div>
<div class="t" style="left:45px;width:49px;top:376px;text-align:right;font-size:11px;color:#2a2a2a;">12</div>
<div class="t" style="left:101px;top:376px;font-size:11px;color:#2a2a2a;">14/06/2024</div>
<div class="t" style="left:179px;width:44px;top:376px;text-align:right;font-size:11px;color:#2a2a2a;">3</div>
<div class="t" style="left:229px;top:376px;font-size:11px;color:#2a2a2a;transform:scaleX(0.877);transform-origin:0 0;">TERCEIRO XXXX</div>
<div class="t" style="left:364px;top:376px;font-size:11px;color:#2a2a2a;transform:scaleX(0.9);transform-origin:0 0;">TERCEIRO</div>
<div class="a" style="left:21px;top:390px;width:23px;height:1.5px;background:#c4c4c4"></div>
<div class="a" style="left:45px;top:390px;width:461px;height:1px;background:#ebebeb"></div>
<div class="a" style="left:43px;top:145px;width:2px;height:247px;background:#cbcbcb"></div>
<div class="a" style="left:1234px;top:162px;width:15px;height:333px;background:#f0f0f0"></div>
<div class="a" style="left:21px;top:495px;width:1228px;height:15px;background:#f0f0f0"></div>
<svg class="a" style="left:1240px;top:149px" width="3" height="11"><rect x="0.75" y="0.75" width="1.5" height="1.5" fill="#4a6fb8"/><rect x="0.75" y="4.75" width="1.5" height="1.5" fill="#4a6fb8"/><rect x="0.75" y="8.75" width="1.5" height="1.5" fill="#4a6fb8"/></svg>
<svg class="a" style="left:1236px;top:167px" width="11" height="7"><path d="M0.5 6 L5.5 1 L10.5 6" fill="none" stroke="#606060" stroke-width="1"/></svg>
<svg class="a" style="left:1236px;top:484px" width="11" height="7"><path d="M0.5 1 L5.5 6 L10.5 1" fill="none" stroke="#606060" stroke-width="1"/></svg>
<svg class="a" style="left:49px;top:497px" width="7" height="11"><path d="M6 0.5 L1 5.5 L6 10.5" fill="none" stroke="#606060" stroke-width="1"/></svg>
<svg class="a" style="left:1223px;top:497px" width="7" height="11"><path d="M1 0.5 L6 5.5 L1 10.5" fill="none" stroke="#606060" stroke-width="1"/></svg><!--/GRID-->
<!--BOTTOM--><div class="a" style="left:20px;top:541px;width:100px;height:22px;border:1px solid #c6c6c6;border-radius:3px;background:#fdfdfd"></div>
<div class="a" style="left:20px;top:541px;width:100px;height:22px;display:flex;align-items:center;justify-content:center;gap:3px"><svg width="16" height="16" viewBox="0 0 16 16" style="flex:none"><path d="M8 2 V14 M2 8 H14" stroke="#5b8fd6" stroke-width="1.6"/></svg><span style="font-size:11px;line-height:1;color:#1e1e1e;white-space:nowrap">Incluir</span></div>
<div class="a" style="left:121px;top:541px;width:100px;height:22px;border:1px solid #c6c6c6;border-radius:3px;background:#fdfdfd"></div>
<div class="a" style="left:121px;top:541px;width:100px;height:22px;display:flex;align-items:center;justify-content:center;gap:3px"><svg width="16" height="16" viewBox="0 0 16 16" style="flex:none"><g fill="none" stroke="#3f74c9" stroke-width="1.2" stroke-linecap="round" stroke-linejoin="round"><path d="M8.5 3.3 H3.5 A1.5 1.5 0 0 0 2 4.8 V13 A1.5 1.5 0 0 0 3.5 14.5 H11.5 A1.5 1.5 0 0 0 13 13 V8.5"/><path d="M13.3 1.6 L15 3.3 L8.2 10.1 L5.6 10.9 L6.4 8.3 Z"/></g></svg><span style="font-size:11px;line-height:1;color:#1e1e1e;white-space:nowrap">Alterar</span></div>
<div class="a" style="left:222px;top:541px;width:100px;height:22px;border:1px solid #c6c6c6;border-radius:3px;background:#fdfdfd"></div>
<div class="a" style="left:222px;top:541px;width:100px;height:22px;display:flex;align-items:center;justify-content:center;gap:3px"><svg width="16" height="16" viewBox="0 0 16 16" style="flex:none"><g fill="none" stroke="#3f74c9" stroke-width="1.2" stroke-linecap="round" stroke-linejoin="round"><circle cx="6.6" cy="6.6" r="5.3"/><path d="M10.5 10.5 L15 15"/></g></svg><span style="font-size:11px;line-height:1;color:#1e1e1e;white-space:nowrap">Consultar</span></div>
<div class="a" style="left:323px;top:541px;width:100px;height:22px;border:1px solid #c6c6c6;border-radius:3px;background:#fdfdfd"></div>
<div class="a" style="left:323px;top:541px;width:100px;height:22px;display:flex;align-items:center;justify-content:center;gap:3px"><svg width="16" height="16" viewBox="0 0 16 16" style="flex:none"><g fill="none" stroke="#3f74c9" stroke-width="1.2" stroke-linecap="round" stroke-linejoin="round"><path d="M1.5 3.8 H14.5 M5.5 3.8 V2.2 H10.5 V3.8 M2.8 3.8 L4 15 H12 L13.2 3.8 M6.5 7.8 L9.5 10.8 M9.5 7.8 L6.5 10.8"/></g></svg><span style="font-size:11px;line-height:1;color:#1e1e1e;white-space:nowrap">Excluir</span></div>
<div class="a" style="left:424px;top:541px;width:100px;height:22px;border:1px solid #c6c6c6;border-radius:3px;background:#fdfdfd"></div>
<div class="a" style="left:424px;top:541px;width:100px;height:22px;display:flex;align-items:center;justify-content:center;gap:3px"><svg width="16" height="16" viewBox="0 0 16 16" style="flex:none;opacity:1"><g fill="none" stroke="#3f74c9" stroke-width="1.2"><path d="M4.5 14.8 H3.2 A1.2 1.2 0 0 1 2 13.6 V2.4 A1.2 1.2 0 0 1 3.2 1.2 H7.8 L11.3 4.7 V9.8 M7.8 1.2 V3.5 A1.2 1.2 0 0 0 9 4.7 H11.3"/></g><text x="5" y="15.8" font-size="5.6" font-family="Liberation Sans" font-weight="bold" fill="#3f74c9" textLength="10.8" lengthAdjust="spacingAndGlyphs">NF-E</text></svg><span style="font-size:11px;line-height:1;color:#1e1e1e;white-space:nowrap">Emite NF-es</span></div>
<div class="a" style="left:525px;top:541px;width:100px;height:22px;border:1px solid #c6c6c6;border-radius:3px;background:#fdfdfd"></div>
<div class="a" style="left:525px;top:541px;width:100px;height:22px;display:flex;align-items:center;justify-content:center;gap:3px"><svg width="16" height="16" viewBox="0 0 16 16" style="flex:none"><g fill="none" stroke="#3f74c9" stroke-width="1.2" stroke-linecap="round" stroke-linejoin="round"><rect x="1.5" y="2" width="13" height="12.5" rx="1.5"/><path d="M1.5 5.5 H14.5 M8 2 V5.5"/></g></svg><span style="font-size:11px;line-height:1;color:#1e1e1e;white-space:nowrap">Gerar MDF-e</span></div>
<div class="a" style="left:20px;top:564px;width:100px;height:22px;border:1px solid #c6c6c6;border-radius:3px;background:#fdfdfd"></div>
<div class="a" style="left:20px;top:564px;width:100px;height:22px;display:flex;align-items:center;justify-content:center;gap:3px"><svg width="16" height="16" viewBox="0 0 16 16" style="flex:none"><g fill="none" stroke="#3f74c9" stroke-width="1.2" stroke-linecap="round" stroke-linejoin="round"><path d="M2.5 4 V13 A1 1 0 0 0 3.5 14 H9"/><rect x="4.5" y="1.5" width="9" height="9" rx="1"/><path d="M6.5 4 H9.5 V6.5 H6.5 Z M11.5 4 V8 M6.5 8.5 H10"/><path d="M14.8 9.5 L10 14.3 L8.5 14.8 L9 13.3 L13.8 8.5 Z"/></g></svg><span style="font-size:11px;line-height:1;color:#1e1e1e;white-space:nowrap">Pedidos/notas</span></div>
<div class="a" style="left:121px;top:564px;width:100px;height:22px;border:1px solid #c6c6c6;border-radius:3px;background:#fdfdfd"></div>
<div class="a" style="left:121px;top:564px;width:100px;height:22px;display:flex;align-items:center;justify-content:center;gap:3px"><svg width="16" height="16" viewBox="0 0 16 16" style="flex:none"><g fill="none" stroke="#3f74c9" stroke-width="1.2" stroke-linecap="round" stroke-linejoin="round"><path d="M4 5 V2.5 A1 1 0 0 1 5 1.5 H11 A1 1 0 0 1 12 2.5 V5"/><rect x="1.5" y="5" width="13" height="7" rx="1.5"/><rect x="4" y="9.5" width="8" height="5" rx="1"/></g></svg><span style="font-size:11px;line-height:1;color:#1e1e1e;white-space:nowrap">Listagem</span></div>
<div class="a" style="left:222px;top:564px;width:100px;height:22px;border:1px solid #c6c6c6;border-radius:3px;background:#fdfdfd"></div>
<div class="a" style="left:222px;top:564px;width:100px;height:22px;display:flex;align-items:center;justify-content:center;gap:3px"><svg width="16" height="16" viewBox="0 0 16 16" style="flex:none"><g fill="none" stroke="#3f74c9" stroke-width="1.2" stroke-linecap="round" stroke-linejoin="round"><path d="M7 14.8 H3.2 A1.2 1.2 0 0 1 2 13.6 V2.4 A1.2 1.2 0 0 1 3.2 1.2 H8.5 L12 4.7 V7 M8.5 1.2 V4.7 H12 M3.5 7.5 H10 V10.5 H3.5 Z M3.5 12.5 H7"/><rect x="10.5" y="11" width="4" height="4" fill="#3f74c9"/><path d="M11.3 11 V9.8 A1.2 1.2 0 0 1 13.7 9.8 V11"/></g></svg><span style="font-size:11px;line-height:1;color:#1e1e1e;white-space:nowrap">Pedidos</span></div>
<div class="a" style="left:323px;top:564px;width:100px;height:22px;border:1px solid #c6c6c6;border-radius:3px;background:#fdfdfd"></div>
<div class="a" style="left:323px;top:564px;width:100px;height:22px;display:flex;align-items:center;justify-content:center;gap:3px"><svg width="16" height="16" viewBox="0 0 16 16" style="flex:none;opacity:1"><g fill="none" stroke="#3f74c9" stroke-width="1.2"><path d="M4.5 14.8 H3.2 A1.2 1.2 0 0 1 2 13.6 V2.4 A1.2 1.2 0 0 1 3.2 1.2 H7.8 L11.3 4.7 V9.8 M7.8 1.2 V3.5 A1.2 1.2 0 0 0 9 4.7 H11.3"/></g><text x="5" y="15.8" font-size="5.6" font-family="Liberation Sans" font-weight="bold" fill="#3f74c9" textLength="10.8" lengthAdjust="spacingAndGlyphs">NF-E</text></svg><span style="font-size:11px;line-height:1;color:#1e1e1e;white-space:nowrap">Notas</span></div>
<div class="a" style="left:424px;top:564px;width:100px;height:22px;border:1px solid #d2d2d2;border-radius:3px;background:#ebebeb"></div>
<div class="a" style="left:424px;top:564px;width:100px;height:22px;display:flex;align-items:center;justify-content:center;gap:3px"><svg width="16" height="16" viewBox="0 0 16 16" style="flex:none;opacity:1"><g fill="none" stroke="#9fb4d8" stroke-width="1.2"><path d="M4.5 14.8 H3.2 A1.2 1.2 0 0 1 2 13.6 V2.4 A1.2 1.2 0 0 1 3.2 1.2 H7.8 L11.3 4.7 V9.8 M7.8 1.2 V3.5 A1.2 1.2 0 0 0 9 4.7 H11.3"/></g><text x="5" y="15.8" font-size="5.6" font-family="Liberation Sans" font-weight="bold" fill="#9fb4d8" textLength="10.8" lengthAdjust="spacingAndGlyphs">NF-E</text></svg><span style="font-size:11px;line-height:1;color:#9c9c9c;white-space:nowrap">Exporta XML</span></div>
<div class="a" style="left:525px;top:564px;width:100px;height:22px;border:1px solid #c6c6c6;border-radius:3px;background:#fdfdfd"></div>
<div class="a" style="left:525px;top:564px;width:100px;height:22px;display:flex;align-items:center;justify-content:center;gap:3px"><svg width="16" height="16" viewBox="0 0 16 16" style="flex:none"><g fill="none" stroke="#3f74c9" stroke-width="1.2" stroke-linecap="round" stroke-linejoin="round"><path d="M12.5 14.5 H3.5 A1 1 0 0 1 2.5 13.5 V2.5 A1 1 0 0 1 3.5 1.5 H9 L13.5 6 V13.5 A1 1 0 0 1 12.5 14.5 Z M9 1.5 V6 H13.5 M5 8.5 H11 M5 10.5 H11 M5 12.5 H11"/></g></svg><span style="font-size:11px;line-height:1;color:#1e1e1e;white-space:nowrap">Relat./Gráficos</span></div>
<div class="a" style="left:1049px;top:541px;width:87px;height:22px;border:1px solid #c6c6c6;border-radius:3px;background:#fdfdfd"></div>
<div class="a" style="left:1049px;top:541px;width:87px;height:22px;display:flex;align-items:center;justify-content:center;gap:3px"><svg width="16" height="16" viewBox="0 0 16 16" style="flex:none"><g fill="none" stroke="#3f74c9" stroke-width="1.2" stroke-linecap="round" stroke-linejoin="round"><path d="M2 7 A6 6 0 0 1 13 4.5 M14 1.5 V5 H10.5 M14 9 A6 6 0 0 1 3 11.5 M2 14.5 V11 H5.5"/></g></svg><span style="font-size:11px;line-height:1;color:#1e1e1e;white-space:nowrap">F5-Atuali<u style="text-decoration-thickness:1px;text-underline-offset:2px">z</u>ar</span></div>
<div class="a" style="left:1150px;top:541px;width:87px;height:22px;border:1px solid #c6c6c6;border-radius:3px;background:#fdfdfd"></div>
<div class="a" style="left:1150px;top:541px;width:87px;height:22px;display:flex;align-items:center;justify-content:center;gap:3px"><svg width="16" height="16" viewBox="0 0 16 16" style="flex:none"><g fill="none" stroke="#3f74c9" stroke-width="1.2" stroke-linecap="round" stroke-linejoin="round"><path d="M1 1.8 H15 L9.3 8.5 V14.2 A0.6 0.6 0 0 1 8.3 14.5 L6.8 13 V8.5 Z"/></g></svg><span style="font-size:11px;line-height:1;color:#1e1e1e;white-space:nowrap">F9-Filtros</span></div>
<div class="a" style="left:1049px;top:564px;width:87px;height:22px;border:1px solid #c6c6c6;border-radius:3px;background:#fdfdfd"></div>
<div class="a" style="left:1049px;top:564px;width:87px;height:22px;display:flex;align-items:center;justify-content:center;gap:3px"><svg width="16" height="16" viewBox="0 0 16 16" style="flex:none"><g fill="none" stroke="#3f74c9" stroke-width="1.2" stroke-linecap="round" stroke-linejoin="round"><rect x="1.5" y="1.5" width="13" height="13" rx="1.5"/><path d="M1.5 5.8 H14.5 M5.8 5.8 V14.5"/></g></svg><span style="font-size:11px;line-height:1;color:#1e1e1e;white-space:nowrap">Layout</span></div>
<div class="a" style="left:1150px;top:564px;width:87px;height:22px;border:1px solid #c6c6c6;border-radius:3px;background:#fdfdfd"></div>
<div class="a" style="left:1150px;top:564px;width:87px;height:22px;display:flex;align-items:center;justify-content:center;gap:3px"><svg width="16" height="16" viewBox="0 0 16 16" style="flex:none"><g fill="none" stroke="#3f74c9" stroke-width="1.2" stroke-linecap="round" stroke-linejoin="round"><path d="M3 1 V4.5 M3 7.5 V15 M8 1 V9.5 M8 12.5 V15 M13 1 V4.5 M13 7.5 V15"/><circle cx="3" cy="6" r="1.6"/><circle cx="8" cy="11" r="1.6"/><circle cx="13" cy="6" r="1.6"/></g></svg><span style="font-size:11px;line-height:1;color:#1e1e1e;white-space:nowrap">Configurar</span></div>
<div class="a" style="left:1137px;top:541px;width:12px;height:22px;border:1px solid #c6c6c6;border-radius:3px;background:#fdfdfd;display:flex;align-items:center;justify-content:center;padding-top:3px"><svg width="6" height="3"><path d="M0.5 0.5 L3 2.5 L5.5 0.5" fill="none" stroke="#8fa3c6" stroke-width="1"/></svg></div>
<div class="a" style="left:1238px;top:541px;width:12px;height:22px;border:1px solid #c6c6c6;border-radius:3px;background:#fdfdfd;display:flex;align-items:center;justify-content:center;padding-top:3px"><svg width="6" height="3"><path d="M0.5 0.5 L3 2.5 L5.5 0.5" fill="none" stroke="#8fa3c6" stroke-width="1"/></svg></div>
<div class="a" style="left:1137px;top:564px;width:12px;height:22px;border:1px solid #c6c6c6;border-radius:3px;background:#fdfdfd;display:flex;align-items:center;justify-content:center;padding-top:3px"><svg width="6" height="3"><path d="M0.5 0.5 L3 2.5 L5.5 0.5" fill="none" stroke="#8fa3c6" stroke-width="1"/></svg></div>
<div class="a" style="left:1238px;top:564px;width:12px;height:22px;border:1px solid #c6c6c6;border-radius:3px;background:#fdfdfd;display:flex;align-items:center;justify-content:center;padding-top:3px"><svg width="6" height="3"><path d="M0.5 0.5 L3 2.5 L5.5 0.5" fill="none" stroke="#8fa3c6" stroke-width="1"/></svg></div>
<div class="a" style="left:1150px;top:587px;width:100px;height:44px;border:1px solid #c6c6c6;border-radius:3px;background:#fdfdfd"></div>
<div class="a" style="left:1150px;top:587px;width:100px;height:44px;display:flex;align-items:center;justify-content:center;gap:3px"><svg width="16" height="16" viewBox="0 0 16 16" style="flex:none"><g fill="none" stroke="#3f74c9" stroke-width="1.2" stroke-linecap="round" stroke-linejoin="round"><path d="M5 2 H2.5 A0.8 0.8 0 0 0 1.7 2.8 V13.2 A0.8 0.8 0 0 0 2.5 14 H5"/><path d="M5.5 6.5 H9.5 V3.8 L14.3 8 L9.5 12.2 V9.5 H5.5 Z" stroke="#5b8fd6"/></g></svg><span style="font-size:11px;line-height:1;color:#1e1e1e;white-space:nowrap"><u style="text-decoration-thickness:1px;text-underline-offset:2px">S</u>air</span></div>
<svg class="a" style="left:19px;top:509px" width="305" height="29"><path d="M1.5 1 V26.5 H281 C284 26.5 285.5 25 287 22.5 L300.5 2" fill="none" stroke="#b4b4b4" stroke-width="1"/></svg>
<svg class="a" style="left:25px;top:516px" width="16" height="15" viewBox="0 0 16 15"><path d="M0.8 0.8 H15.2 L9.3 7.5 V13.3 A0.7 0.7 0 0 1 8.2 13.8 L6.7 12.4 V7.5 Z" fill="none" stroke="#3f74c9" stroke-width="1.2" stroke-linejoin="round"/></svg>
<div class="a" style="left:48px;top:514px;width:231px;height:19px;border:1px solid #c2c2c2;border-radius:3px;background:#fff"></div>
<div class="t" style="left:52px;top:518px;font-size:10.6px;font-style:italic;color:#6a6a6a">Digite aqui para buscar…</div>
<svg class="a" style="left:288px;top:518px" width="10" height="10"><path d="M1 1 L9 9 M9 1 L1 9" stroke="#8a8a8a" stroke-width="1.1"/></svg>
<svg class="a" style="left:1250px;top:625px" width="10" height="10"><g fill="#b8b8b8"><rect x="7" y="1" width="2" height="2"/><rect x="4" y="4" width="2" height="2"/><rect x="7" y="4" width="2" height="2"/><rect x="1" y="7" width="2" height="2"/><rect x="4" y="7" width="2" height="2"/><rect x="7" y="7" width="2" height="2"/></g></svg><!--/BOTTOM-->
</body></html>
